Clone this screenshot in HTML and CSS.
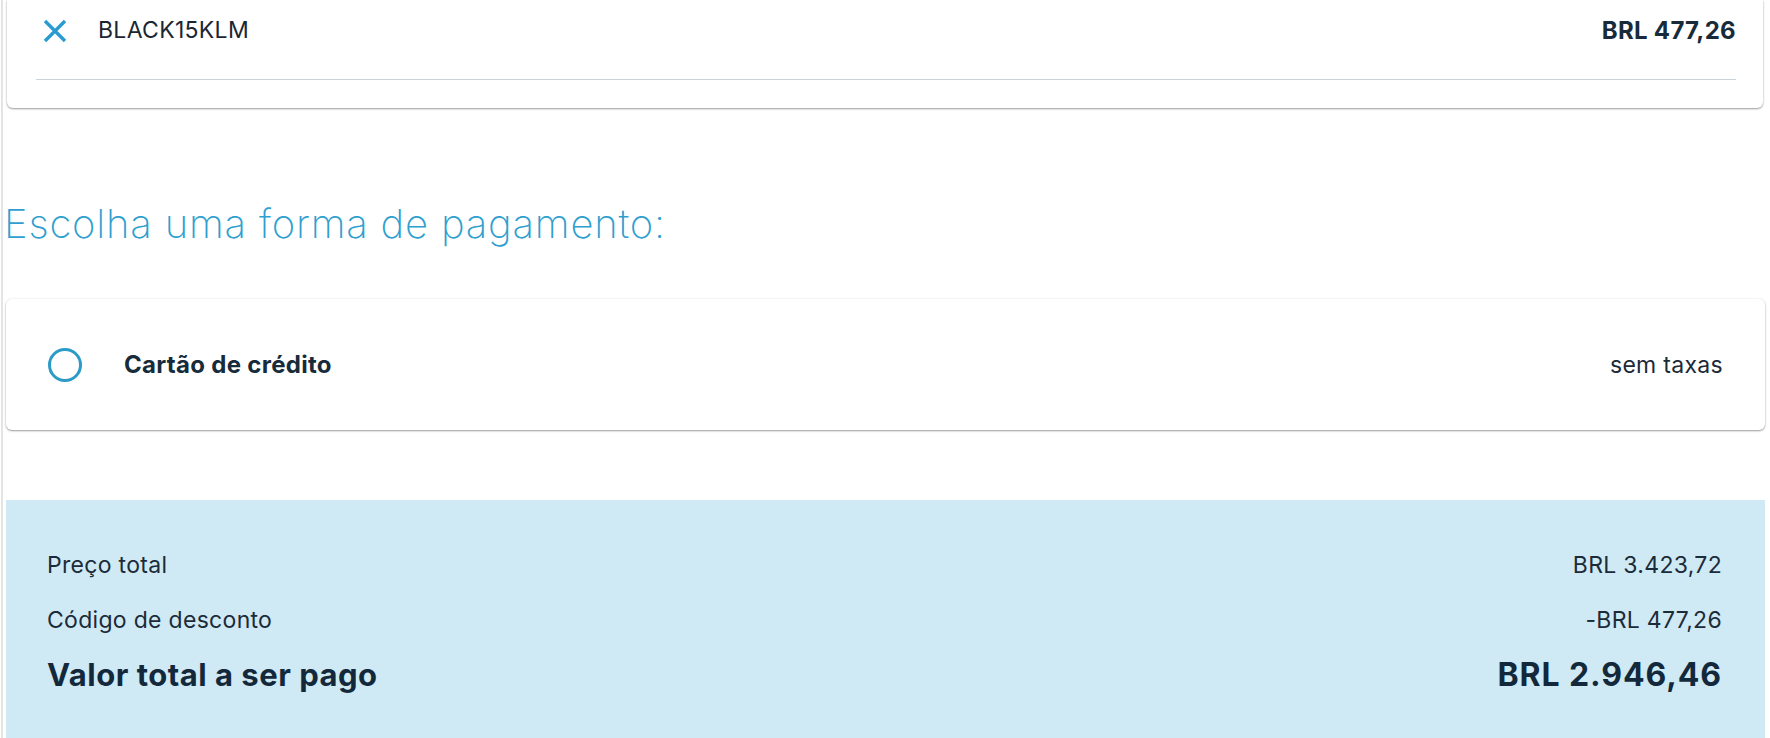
FILE: index.html
```html
<!DOCTYPE html>
<html lang="pt-BR">
<head>
<meta charset="utf-8">
<title>Pagamento</title>
<link rel="stylesheet" href="styles.css">
</head>
<body>
<div class="page">
  <section class="card coupon">
    <div class="coupon-row">
      <button class="remove" aria-label="Remover código">
        <svg width="24" height="24" viewBox="0 0 24 24"><path d="M2 2 L22 22 M22 2 L2 22" stroke="#2a9ad1" stroke-width="3.4" stroke-linecap="butt" fill="none"/></svg>
      </button>
      <span class="coupon-code">BLACK15KLM</span>
      <span class="coupon-value">BRL 477,26</span>
    </div>
    <div class="divider"></div>
  </section>

  <h2 class="heading">Escolha uma forma de pagamento:</h2>

  <section class="card method">
    <span class="radio"></span>
    <span class="method-name">Cartão de crédito</span>
    <span class="method-fee">sem taxas</span>
  </section>

  <section class="summary">
    <div class="sum-row"><span>Preço total</span><span>BRL 3.423,72</span></div>
    <div class="sum-row"><span>Código de desconto</span><span>-BRL 477,26</span></div>
    <div class="sum-row total"><span>Valor total a ser pago</span><span class="total-value">BRL 2.946,46</span></div>
  </section>
</div>
</body>
</html>
```

FILE: styles.css
```css
html, body {
  margin: 0;
  padding: 0;
  background: #ffffff;
}
body {
  font-family: "Inter", "Liberation Sans", sans-serif;
  color: #1b2a38;
}
.page {
  margin-left: 1px;
  border-left: 2px solid #e4e4e4;
  padding: 0 5px 0 3px;
  min-height: 738px;
  box-sizing: border-box;
}
.card {
  background: #ffffff;
  border-radius: 6px;
  box-shadow: 0 1px 2px rgba(0, 0, 0, 0.38), 0 0 3px rgba(0, 0, 0, 0.06);
}
.coupon {
  margin: 0 2px 0 1px;
  padding: 0 27px 28px 29px;
  border-radius: 0 0 6px 6px;
}
.coupon-row {
  height: 60px;
  display: flex;
  align-items: center;
  margin-bottom: 19px;
}
.remove {
  border: 0;
  background: none;
  padding: 0;
  margin: 2px 0 0 7px;
  width: 24px;
  height: 24px;
  display: flex;
}
.coupon-code {
  margin-left: 31px;
  font-size: 23px;
  letter-spacing: 0.3px;
  color: #1a2733;
}
.coupon-value {
  margin-left: auto;
  font-size: 24px;
  font-weight: 700;
  letter-spacing: 0.3px;
  color: #172b3b;
}
.divider {
  height: 1px;
  background: #c9d4dc;
}
.heading {
  margin: 92px 0 51px -2px;
  font-size: 40px;
  line-height: 48px;
  font-weight: 200;
  color: #2e9fcf;
  letter-spacing: 0.8px;
}
.method {
  height: 131px;
  display: flex;
  align-items: center;
  padding: 0 42px;
  box-sizing: border-box;
}
.radio {
  width: 34px;
  height: 34px;
  border: 3.5px solid #2c9bc6;
  border-radius: 50%;
  box-sizing: border-box;
}
.method-name {
  margin-left: 42px;
  font-size: 24px;
  font-weight: 700;
  letter-spacing: 0.3px;
  color: #172b3b;
}
.method-fee {
  margin-left: auto;
  font-size: 23px;
  letter-spacing: 0.3px;
  color: #1b2a38;
}
.summary {
  margin-top: 70px;
  background: #cfeaf5;
  padding: 50px 43px 40px 41px;
  min-height: 238px;
  box-sizing: border-box;
}
.sum-row {
  display: flex;
  justify-content: space-between;
  font-size: 23px;
  letter-spacing: 0.3px;
  line-height: 30px;
  color: #1c2b39;
  margin-bottom: 25px;
}
.sum-row.total {
  margin-top: -3px;
  font-size: 31px;
  letter-spacing: 0.5px;
  line-height: 36px;
  font-weight: 700;
  color: #13293b;
}
.total-value {
  font-size: 32px;
  letter-spacing: 0.9px;
}
```
